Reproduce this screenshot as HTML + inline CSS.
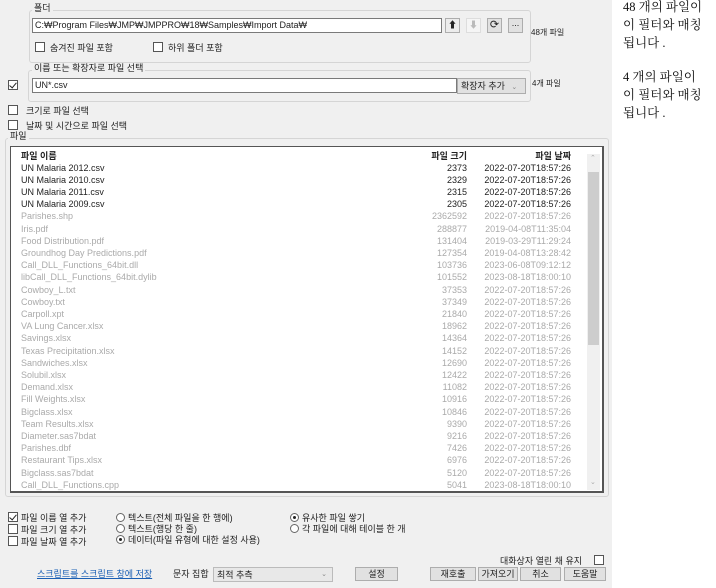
<!DOCTYPE html><html><head><meta charset="utf-8"><style>
*{box-sizing:border-box}
body{margin:0;width:716px;height:588px;background:#fff;font-family:"Liberation Sans","Noto Sans CJK KR",sans-serif;font-size:9px;color:#222;position:relative;overflow:hidden}
.a{position:absolute;white-space:nowrap}
.dlg{position:absolute;left:0;top:0;width:612px;height:588px;background:#f0f0f0}
.grp{position:absolute;border:1px solid #d5d5d5;border-radius:3px}
.gt{position:absolute;background:#f0f0f0;padding:0 2px;font-size:9px;line-height:10px}
.inp{position:absolute;background:#fff;border:1px solid #7a7a7a;font-size:9px;line-height:13px;padding-left:2px}
.cb{position:absolute;width:10px;height:10px;border:1px solid #555;background:#fff}
.cb.on::after{content:"";position:absolute;left:2px;top:0px;width:3px;height:6px;border:solid #222;border-width:0 1.5px 1.5px 0;transform:rotate(40deg)}
.rd{position:absolute;width:9px;height:9px;border:1px solid #666;border-radius:50%;background:#fff}
.rd.on::after{content:"";position:absolute;left:2px;top:2px;width:3px;height:3px;border-radius:50%;background:#222}
.btn{position:absolute;border:1px solid #adadad;background:#e1e1e1;text-align:center;font-size:9px;line-height:14px}
.row{position:absolute;left:21px;width:550px;height:12px;line-height:12px;font-size:9px}
.row span{position:absolute}
.row .n{left:0}.row .s{right:104px}.row .d{right:0}
.g{color:#aaa}
.rt{position:absolute;left:623px;font-family:"Liberation Serif","Noto Serif CJK SC",serif;font-size:12.5px;line-height:18px;color:#111}
</style></head><body>
<div class="dlg">
<div class="grp" style="left:29px;top:10px;width:502px;height:53px"></div>
<div class="gt a" style="left:32px;top:3px">폴더</div>
<div class="inp" style="left:32px;top:18px;width:410px;height:15px">C:₩Program Files₩JMP₩JMPPRO₩18₩Samples₩Import Data₩</div>
<div class="btn" style="left:445px;top:18px;width:15px;height:15px;background:#ececec;line-height:13px">&#11014;</div>
<div class="btn" style="left:466px;top:18px;width:15px;height:15px;background:#f5f5f5;color:#bbb;border-color:#ddd;line-height:13px">&#11015;</div>
<div class="btn" style="left:487px;top:18px;width:15px;height:15px;line-height:13px;font-size:11px">&#10227;</div>
<div class="btn" style="left:508px;top:18px;width:15px;height:15px;line-height:9px">...</div>
<div class="a" style="left:531px;top:27px;font-size:8px">48개 파일</div>
<div class="cb" style="left:35px;top:42px"></div><div class="a" style="left:50px;top:41px">숨겨진 파일 포함</div>
<div class="cb" style="left:153px;top:42px"></div><div class="a" style="left:168px;top:41px">하위 폴더 포함</div>

<div class="grp" style="left:28px;top:70px;width:503px;height:32px"></div>
<div class="gt a" style="left:32px;top:63px">이름 또는 확장자로 파일 선택</div>
<div class="cb on" style="left:8px;top:80px"></div>
<div class="inp" style="left:32px;top:78px;width:425px;height:15px">UN*.csv</div>
<div class="btn" style="left:457px;top:78px;width:69px;height:16px;line-height:14px;text-align:left;padding-left:3px">확장자 추가 <span style="color:#888;font-size:7px;margin-left:4px">&#8964;</span></div>
<div class="a" style="left:532px;top:78px;font-size:8px">4개 파일</div>

<div class="cb" style="left:8px;top:105px"></div><div class="a" style="left:26px;top:104px">크기로 파일 선택</div>
<div class="cb" style="left:8px;top:120px"></div><div class="a" style="left:26px;top:119px">날짜 및 시간으로 파일 선택</div>

<div class="grp" style="left:5px;top:138px;width:604px;height:359px"></div>
<div class="gt a" style="left:8px;top:131px">파일</div>
<div style="position:absolute;left:10px;top:146px;width:594px;height:347px;background:#fff;border:1px solid #555;border-right-width:2px;border-bottom-width:2px"></div>
<div style="position:absolute;left:587px;top:154px;width:13px;height:336px;background:#f0f0f0"></div>
<div style="position:absolute;left:588px;top:172px;width:11px;height:173px;background:#cdcdcd"></div>
<div class="a" style="left:590px;top:154px;color:#aaa;font-size:7px">&#8963;</div>
<div class="a" style="left:590px;top:478px;color:#aaa;font-size:7px">&#8964;</div>
<div class="row" style="top:150px;font-weight:bold"><span class="n">파일 이름</span><span class="s">파일 크기</span><span class="d">파일 날짜</span></div>
<div class="row" style="top:162px"><span class="n">UN Malaria 2012.csv</span><span class="s">2373</span><span class="d">2022-07-20T18:57:26</span></div>
<div class="row" style="top:174px"><span class="n">UN Malaria 2010.csv</span><span class="s">2329</span><span class="d">2022-07-20T18:57:26</span></div>
<div class="row" style="top:186px"><span class="n">UN Malaria 2011.csv</span><span class="s">2315</span><span class="d">2022-07-20T18:57:26</span></div>
<div class="row" style="top:198px"><span class="n">UN Malaria 2009.csv</span><span class="s">2305</span><span class="d">2022-07-20T18:57:26</span></div>
<div class="g">
<div class="row" style="top:210.3px"><span class="n">Parishes.shp</span><span class="s">2362592</span><span class="d">2022-07-20T18:57:26</span></div>
<div class="row" style="top:222.5px"><span class="n">Iris.pdf</span><span class="s">288877</span><span class="d">2019-04-08T11:35:04</span></div>
<div class="row" style="top:234.7px"><span class="n">Food Distribution.pdf</span><span class="s">131404</span><span class="d">2019-03-29T11:29:24</span></div>
<div class="row" style="top:246.9px"><span class="n">Groundhog Day Predictions.pdf</span><span class="s">127354</span><span class="d">2019-04-08T13:28:42</span></div>
<div class="row" style="top:259.1px"><span class="n">Call_DLL_Functions_64bit.dll</span><span class="s">103736</span><span class="d">2023-06-08T09:12:12</span></div>
<div class="row" style="top:271.3px"><span class="n">libCall_DLL_Functions_64bit.dylib</span><span class="s">101552</span><span class="d">2023-08-18T18:00:10</span></div>
<div class="row" style="top:283.5px"><span class="n">Cowboy_L.txt</span><span class="s">37353</span><span class="d">2022-07-20T18:57:26</span></div>
<div class="row" style="top:295.7px"><span class="n">Cowboy.txt</span><span class="s">37349</span><span class="d">2022-07-20T18:57:26</span></div>
<div class="row" style="top:307.9px"><span class="n">Carpoll.xpt</span><span class="s">21840</span><span class="d">2022-07-20T18:57:26</span></div>
<div class="row" style="top:320.1px"><span class="n">VA Lung Cancer.xlsx</span><span class="s">18962</span><span class="d">2022-07-20T18:57:26</span></div>
<div class="row" style="top:332.3px"><span class="n">Savings.xlsx</span><span class="s">14364</span><span class="d">2022-07-20T18:57:26</span></div>
<div class="row" style="top:344.5px"><span class="n">Texas Precipitation.xlsx</span><span class="s">14152</span><span class="d">2022-07-20T18:57:26</span></div>
<div class="row" style="top:356.7px"><span class="n">Sandwiches.xlsx</span><span class="s">12690</span><span class="d">2022-07-20T18:57:26</span></div>
<div class="row" style="top:368.9px"><span class="n">Solubil.xlsx</span><span class="s">12422</span><span class="d">2022-07-20T18:57:26</span></div>
<div class="row" style="top:381.1px"><span class="n">Demand.xlsx</span><span class="s">11082</span><span class="d">2022-07-20T18:57:26</span></div>
<div class="row" style="top:393.3px"><span class="n">Fill Weights.xlsx</span><span class="s">10916</span><span class="d">2022-07-20T18:57:26</span></div>
<div class="row" style="top:405.5px"><span class="n">Bigclass.xlsx</span><span class="s">10846</span><span class="d">2022-07-20T18:57:26</span></div>
<div class="row" style="top:417.7px"><span class="n">Team Results.xlsx</span><span class="s">9390</span><span class="d">2022-07-20T18:57:26</span></div>
<div class="row" style="top:429.9px"><span class="n">Diameter.sas7bdat</span><span class="s">9216</span><span class="d">2022-07-20T18:57:26</span></div>
<div class="row" style="top:442.1px"><span class="n">Parishes.dbf</span><span class="s">7426</span><span class="d">2022-07-20T18:57:26</span></div>
<div class="row" style="top:454.3px"><span class="n">Restaurant Tips.xlsx</span><span class="s">6976</span><span class="d">2022-07-20T18:57:26</span></div>
<div class="row" style="top:466.5px"><span class="n">Bigclass.sas7bdat</span><span class="s">5120</span><span class="d">2022-07-20T18:57:26</span></div>
<div class="row" style="top:478.7px"><span class="n">Call_DLL_Functions.cpp</span><span class="s">5041</span><span class="d">2023-08-18T18:00:10</span></div>
</div>

<div class="cb on" style="left:8px;top:512px"></div><div class="a" style="left:21px;top:511px">파일 이름 열 추가</div>
<div class="cb" style="left:8px;top:524px"></div><div class="a" style="left:21px;top:523px">파일 크기 열 추가</div>
<div class="cb" style="left:8px;top:536px"></div><div class="a" style="left:21px;top:535px">파일 날짜 열 추가</div>
<div class="rd" style="left:116px;top:513px"></div><div class="a" style="left:128px;top:511px">텍스트(전체 파일을 한 행에)</div>
<div class="rd" style="left:116px;top:524px"></div><div class="a" style="left:128px;top:522px">텍스트(행당 한 줄)</div>
<div class="rd on" style="left:116px;top:535px"></div><div class="a" style="left:128px;top:533px">데이터(파일 유형에 대한 설정 사용)</div>
<div class="rd on" style="left:290px;top:513px"></div><div class="a" style="left:302px;top:511px">유사한 파일 쌓기</div>
<div class="rd" style="left:290px;top:524px"></div><div class="a" style="left:302px;top:522px">각 파일에 대해 테이블 한 개</div>

<div class="a" style="left:500px;top:554px">대화상자 열린 채 유지</div>
<div class="cb" style="left:594px;top:555px"></div>
<div class="a" style="left:37px;top:567px;color:#1a5fb4;text-decoration:underline">스크립트를 스크립트 창에 저장</div>
<div class="a" style="left:173px;top:567px">문자 집합</div>
<div class="btn" style="left:213px;top:567px;width:120px;height:15px;text-align:left;padding-left:3px;background:#e8e8e8;border-color:#bbb">최적 추측<span style="position:absolute;right:5px;color:#888;font-size:7px">&#8964;</span></div>
<div class="btn" style="left:355px;top:567px;width:43px;height:14px;line-height:12px">설정</div>
<div class="btn" style="left:430px;top:567px;width:46px;height:14px;line-height:12px">재호출</div>
<div class="btn" style="left:478px;top:567px;width:40px;height:14px;line-height:12px">가져오기</div>
<div class="btn" style="left:520px;top:567px;width:41px;height:14px;line-height:12px">취소</div>
<div class="btn" style="left:564px;top:567px;width:42px;height:14px;line-height:12px">도움말</div>
</div>
<div class="rt" style="top:-2px">48 개의 파일이<br>이 필터와 매칭<br>됩니다 .</div>
<div class="rt" style="top:68px">4 개의 파일이<br>이 필터와 매칭<br>됩니다 .</div>
</body></html>
